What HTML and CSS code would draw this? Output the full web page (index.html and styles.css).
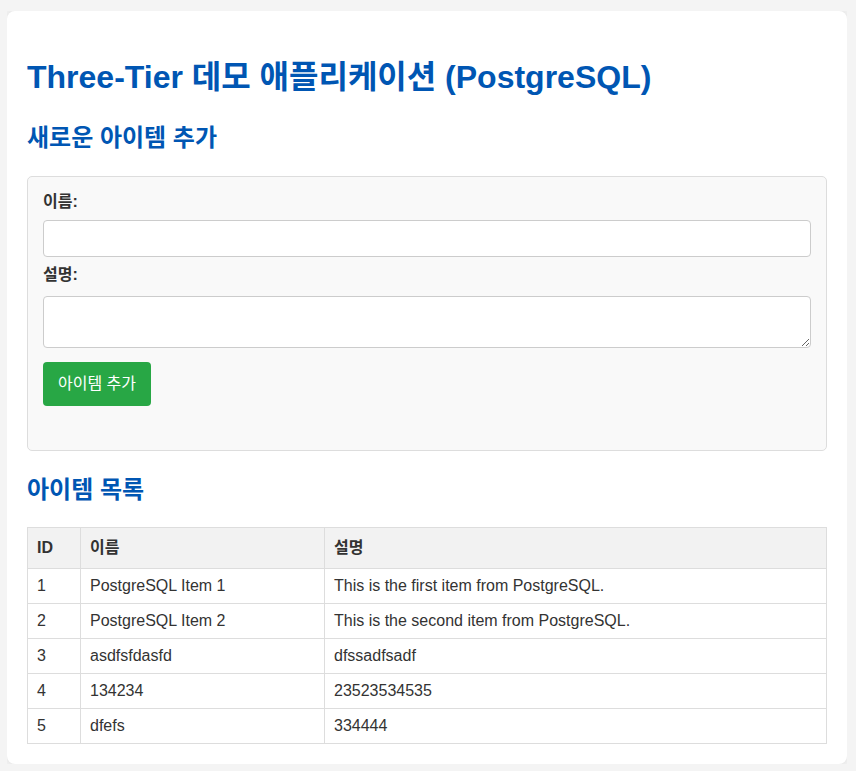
FILE: index.html
```html
<!DOCTYPE html>
<html lang="ko">
<head>
<meta charset="utf-8">
<title>Three-Tier 데모 애플리케이션</title>
<link rel="stylesheet" href="styles.css">
</head>
<body>
<div class="container">
  <h1 class="title">Three-Tier 데모 애플리케이션 (PostgreSQL)</h1>
  <h2 class="section-title">새로운 아이템 추가</h2>
  <form class="form-box">
    <label class="field-label" for="name">이름:</label>
    <input class="field-input" type="text" id="name">
    <label class="field-label" for="desc">설명:</label>
    <textarea class="field-textarea" id="desc"></textarea>
    <button class="btn-add" type="button">아이템 추가</button>
  </form>
  <h2 class="section-title list-title">아이템 목록</h2>
  <table class="items">
    <colgroup>
      <col class="col-id">
      <col class="col-name">
      <col class="col-desc">
    </colgroup>
    <thead>
      <tr><th>ID</th><th>이름</th><th>설명</th></tr>
    </thead>
    <tbody>
      <tr><td>1</td><td>PostgreSQL Item 1</td><td>This is the first item from PostgreSQL.</td></tr>
      <tr><td>2</td><td>PostgreSQL Item 2</td><td>This is the second item from PostgreSQL.</td></tr>
      <tr><td>3</td><td>asdfsfdasfd</td><td>dfssadfsadf</td></tr>
      <tr><td>4</td><td>134234</td><td>23523534535</td></tr>
      <tr><td>5</td><td>dfefs</td><td>334444</td></tr>
    </tbody>
  </table>
</div>
</body>
</html>
```
FILE: styles.css
```css
html, body {
  background: #f4f4f4;
}
body {
  margin: 11px 9px 8px 7px;
  font-family: "Liberation Sans", "Noto Sans CJK KR", sans-serif;
  font-size: 16px;
  color: #333;
}
.container {
  max-width: 800px;
  margin: 0 auto;
  padding: 20px;
  background: #fff;
  border-radius: 8px;
  box-shadow: 0 0 10px rgba(0, 0, 0, 0.1);
}
.title {
  margin: 26px 0 26px;
  font-size: 32px;
  line-height: 40px;
  font-weight: bold;
  color: #0056b3;
}
.section-title {
  margin: 0 0 23px;
  font-size: 24px;
  line-height: 30px;
  font-weight: bold;
  color: #0056b3;
}
.list-title {
  margin-top: 24px;
  margin-bottom: 22px;
}
.form-box {
  display: flex;
  flex-direction: column;
  align-items: flex-start;
  padding: 15px 15px 44px;
  background: #f9f9f9;
  border: 1px solid #ddd;
  border-radius: 5px;
}
.field-label {
  display: block;
  font-weight: bold;
  line-height: 20px;
  margin-bottom: 8px;
}
.field-input,
.field-textarea {
  box-sizing: border-box;
  width: 100%;
  padding: 8px;
  border: 1px solid #ccc;
  border-radius: 4px;
  background: #fff;
  font-family: inherit;
  font-size: 16px;
  margin: 0 0 8px;
}
.field-input {
  height: 37px;
}
.field-textarea {
  height: 52px;
  margin-top: 3px;
  margin-bottom: 14px;
}
.btn-add {
  padding: 10px 15px;
  border: none;
  border-radius: 4px;
  background: #28a745;
  color: #fff;
  font-family: inherit;
  font-size: 16px;
  font-weight: normal;
  line-height: 24px;
  cursor: pointer;
}
.items {
  width: 100%;
  border-collapse: collapse;
  table-layout: fixed;
}
.col-id { width: 53px; }
.col-name { width: 244px; }
.items th,
.items td {
  border: 1px solid #ddd;
  padding: 8px 8px 8px 9px;
  text-align: left;
}
.items th {
  background: #f2f2f2;
  font-weight: bold;
  line-height: 24px;
}
.items td {
  line-height: 18px;
}
```
